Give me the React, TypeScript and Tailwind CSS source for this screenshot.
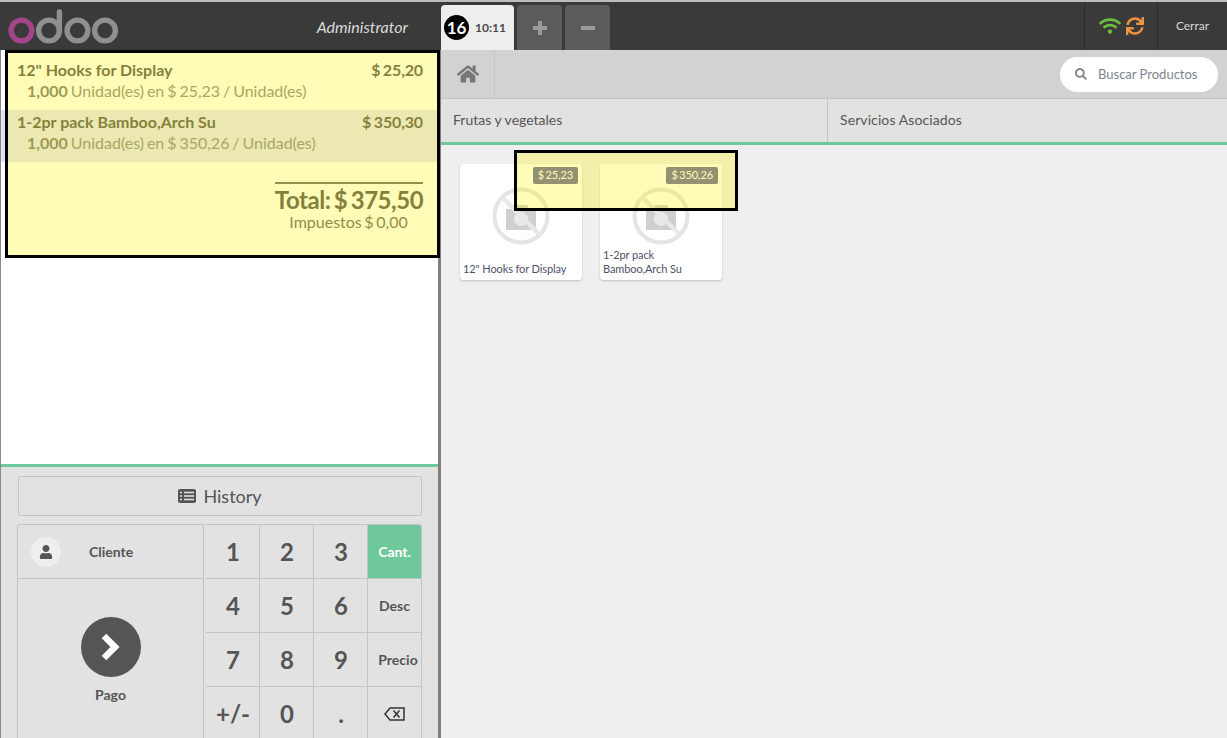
import { FaUser, FaWifi, FaSync, FaHome, FaSearch } from "react-icons/fa";

const OdooLogo = () => (
	<svg width="112" height="36" viewBox="0 0 112 36" fill="none" strokeWidth="5.4">
		<circle cx="13.5" cy="22.5" r="10.4" stroke="#a24689" />
		<circle cx="41" cy="22.5" r="10.4" stroke="#8f8f8f" />
		<path d="M51.4 22.5V4" stroke="#8f8f8f" strokeLinecap="round" />
		<circle cx="69.5" cy="22.5" r="10.4" stroke="#8f8f8f" />
		<circle cx="97" cy="22.5" r="10.4" stroke="#8f8f8f" />
	</svg>
);

const NoImage = () => (
	<svg width="58" height="58" viewBox="0 0 58 58">
		<path d="M14 22h7l2-4h12l2 4h7v21H14z" fill="#cfcfcf" />
		<circle cx="29" cy="32" r="7" fill="#e9e9e9" />
		<circle cx="29" cy="29" r="26.5" fill="none" stroke="#e4e4e4" strokeWidth="4" />
		<path d="M10 10l38 38" stroke="#e8e8e8" strokeWidth="4.5" />
	</svg>
);

const ProductCard = ({ price, name }: { price: string; name: React.ReactNode }) => (
	<div className="relative w-[122px] h-[116px] bg-white rounded-[3px] shadow-[0_1px_2px_rgba(0,0,0,0.2)]">
		<span className="absolute top-[3px] right-[4px] h-[17px] px-[5px] flex items-center rounded-[2px] bg-[#6a6b9f] text-white text-[11px] [word-spacing:-1.2px] tracking-[-0.1px]">
			{price}
		</span>
		<div className="absolute left-[32px] top-[23px]">
			<NoImage />
		</div>
		<div className="absolute left-[3px] bottom-[4px] text-[11px] leading-[14px] text-[#4f5168] tracking-[-0.1px]">{name}</div>
	</div>
);

const OrderLine = ({ name, total, qty, unit, selected }: { name: string; total: string; qty: string; unit: string; selected?: boolean }) => (
	<div className={`h-[52px] pl-4 pr-[15px] pt-[1px] ${selected ? "bg-[#e3e5f6]" : ""}`}>
		<div className="flex justify-between text-[16px] leading-[21px] font-bold text-[#555555]">
			<span>{name}</span>
			<span className="[word-spacing:-1.2px] tracking-[-0.15px]">{total}</span>
		</div>
		<div className="pl-[10px] text-[16px] leading-[21px] text-[#888888] [word-spacing:-1.2px]">
			<span className="font-bold text-[#777777]">{qty}</span> Unidad(es) en {unit} / Unidad(es)
		</div>
	</div>
);

const Key = ({ children, active, small }: { children: React.ReactNode; active?: boolean; small?: boolean }) => (
	<div
		className={`h-[54px] flex items-center justify-center border-r border-b border-[#c4c4c4] ${
			active ? "bg-[#6ec89b] text-white" : "text-[#555555]"
		} ${small ? "text-[14px] font-bold" : "text-[24px] font-bold pl-px"}`}
	>
		{children}
	</div>
);

export default function App() {
	return (
		<div className="relative w-[1227px] h-[738px] overflow-hidden bg-[#f0eeee] font-['Lato','Noto_Sans',sans-serif] text-[#555555]">
			<header className="h-[50px] bg-[#3a3a3a] border-t-2 border-t-[#bdbdbd] flex">
				<div className="w-[441px] shrink-0 flex items-center justify-between pl-2 pr-[33px]">
					<OdooLogo />
					<span className="italic text-[16px] text-[#dadada] mt-[2px]">Administrator</span>
				</div>
				<div className="flex items-end gap-[3px] pt-[3px] h-full">
					<div className="w-[73px] h-[45px] bg-[#eeeeee] rounded-t-[4px] flex items-center pl-[3px] gap-[7px]">
						<span className="w-[25px] h-[25px] rounded-full bg-black text-white font-bold text-[17px] flex items-center justify-center">16</span>
						<span className="text-[12px] font-bold text-[#4a4a4a] -ml-px">10:11</span>
					</div>
					<div className="w-[45px] h-[45px] bg-[#5c5c5c] rounded-t-[4px] flex items-center justify-center text-[#9a9a9a]">
						<svg width="16" height="16" viewBox="0 0 16 16" fill="currentColor"><path d="M6 1h4v5h5v4h-5v5H6v-5H1V6h5z" /></svg>
					</div>
					<div className="w-[45px] h-[45px] bg-[#5c5c5c] rounded-t-[4px] flex items-center justify-center text-[#9a9a9a]">
						<svg width="16" height="16" viewBox="0 0 16 16" fill="currentColor"><path d="M1 6h14v4H1z" /></svg>
					</div>
				</div>
				<div className="ml-auto flex h-full">
					<div className="w-[73px] border-l border-[#2a2a2a] flex items-center justify-center gap-[5px]">
						<FaWifi className="text-[#6cbf3a] text-[22px]" />
						<FaSync className="text-[#ef9440] text-[18px]" />
					</div>
					<div className="w-[70px] border-l border-[#2a2a2a] flex items-center justify-center text-[12px] text-[#d8d8d8]">Cerrar</div>
				</div>
			</header>

			<div className="flex h-[688px]">
				<aside className="w-[441px] shrink-0 flex flex-col bg-white border-l border-l-[#8a8a8a] border-r-[3px] border-r-[#7f7f7f]">
					<div className="h-[414px] shrink-0 pt-2">
						<OrderLine name={'12" Hooks for Display'} total="$ 25,20" qty="1,000" unit="$ 25,23" />
						<OrderLine name="1-2pr pack Bamboo,Arch Su" total="$ 350,30" qty="1,000" unit="$ 350,26" selected />
						<div className="flex justify-end pr-[15px] pt-5">
							<div className="w-[148px] border-t-2 border-[#6a6a6a] flex flex-col items-center">
								<div className="text-[24px] leading-[32px] font-bold text-[#555555] whitespace-nowrap [word-spacing:-2px] tracking-[-0.45px]">Total: $ 375,50</div>
								<div className="text-[16px] leading-[12px] mr-[1px] text-[#666666] whitespace-nowrap [word-spacing:-1.5px]">Impuestos $ 0,00</div>
							</div>
						</div>
					</div>
					<div className="flex-1 bg-[#e2e2e2] border-t-[3px] border-[#6ec89b] pl-4">
						<div className="ml-px mt-[9px] w-[404px] h-[40px] border border-[#c4c4c4] rounded-[3px] flex items-center justify-center gap-[7px] text-[18px]">
							<svg width="18" height="14" viewBox="0 0 18 14">
								<rect width="18" height="14" rx="2" fill="#555555" />
								<path d="M2 3.5h2m2 0h10M2 7h2m2 0h10M2 10.500h2m2 0h10" stroke="#e2e2e2" strokeWidth="1.3" />
							</svg>
							History
						</div>
						<div className="flex mt-2 items-start">
							<div className="w-[187px] h-[240px] border-l border-t border-r border-[#c4c4c4] rounded-tl-[4px]">
								<div className="h-[54px] border-b border-[#c4c4c4] flex items-center pl-[13px]">
									<div className="w-[30px] h-[30px] rounded-full bg-[#eeeeee] flex items-center justify-center text-[14px]">
										<FaUser />
									</div>
									<span className="ml-7 text-[14px] font-bold">Cliente</span>
								</div>
								<div className="flex flex-col items-center pt-[38px]">
									<div className="w-[60px] h-[60px] rounded-full bg-[#555555] flex items-center justify-center">
										<svg width="22" height="30" viewBox="0 0 22 30" fill="none" stroke="#ffffff" strokeWidth="6.500"><path d="M4 4l11 11L4 26" /></svg>
									</div>
									<span className="mt-[7px] text-[14px] font-bold">Pago</span>
								</div>
							</div>
							<div className="ml-[2px] w-[216px] grid grid-cols-4 border-t border-[#c4c4c4] rounded-tr-[4px] overflow-hidden">
								<Key>1</Key>
								<Key>2</Key>
								<Key>3</Key>
								<Key small active>Cant.</Key>
								<Key>4</Key>
								<Key>5</Key>
								<Key>6</Key>
								<Key small>Desc</Key>
								<Key>7</Key>
								<Key>8</Key>
								<Key>9</Key>
								<Key small><span className="pl-[7px]">Precio</span></Key>
								<Key>+/-</Key>
								<Key>0</Key>
								<Key>.</Key>
								<Key small>
									<svg width="21" height="14" viewBox="0 0 21 14" fill="none" stroke="#333333" strokeWidth="1.5"><path d="M6 1h14v12H6L1 7z" /><path d="M9.500 3.500l6 7m0-7l-6 7" /></svg>
								</Key>
							</div>
						</div>
					</div>
				</aside>

				<main className="flex-1 flex flex-col">
					<div className="h-[49px] bg-[#d2d2d2] border-b border-[#c4c4c4] flex items-center justify-between pr-[9px]">
						<div className="w-[54px] h-full border-r border-[#c4c4c4] flex items-center justify-center text-[#777777] text-[22px]">
							<FaHome />
						</div>
						<div className="w-[158px] h-[35px] bg-white rounded-full flex items-center pl-[15px] gap-[11px]">
							<FaSearch className="text-[#888888] text-[12px]" />
							<span className="text-[13px] text-[#808490] mt-[2px]">Buscar Productos</span>
						</div>
					</div>
					<div className="h-[46px] bg-[#e2e2e2] border-b-[3px] border-[#6ec89b] flex text-[14px] text-[#555555]">
						<div className="w-[387px] border-r border-[#c4c4c4] pl-3 pb-[2px] flex items-center">Frutas y vegetales</div>
						<div className="flex-1 pl-3 pb-[2px] flex items-center tracking-[0.1px]">Servicios Asociados</div>
					</div>
					<div className="flex gap-[18px] pl-[19px] pt-[19px]">
						<ProductCard price="$ 25,23" name={'12" Hooks for Display'} />
						<ProductCard price="$ 350,26" name={<>1-2pr pack<br />Bamboo,Arch Su</>} />
					</div>
				</main>
			</div>

			{/* highlight overlays */}
			<div className="absolute left-[5px] top-[50px] w-[435px] h-[208px] border-[3px] border-black bg-[#fff400]/[0.28]" />
			<div className="absolute left-[514px] top-[150px] w-[224px] h-[61px] border-[3px] border-black bg-[#fff400]/[0.28]" />
		</div>
	);
}
